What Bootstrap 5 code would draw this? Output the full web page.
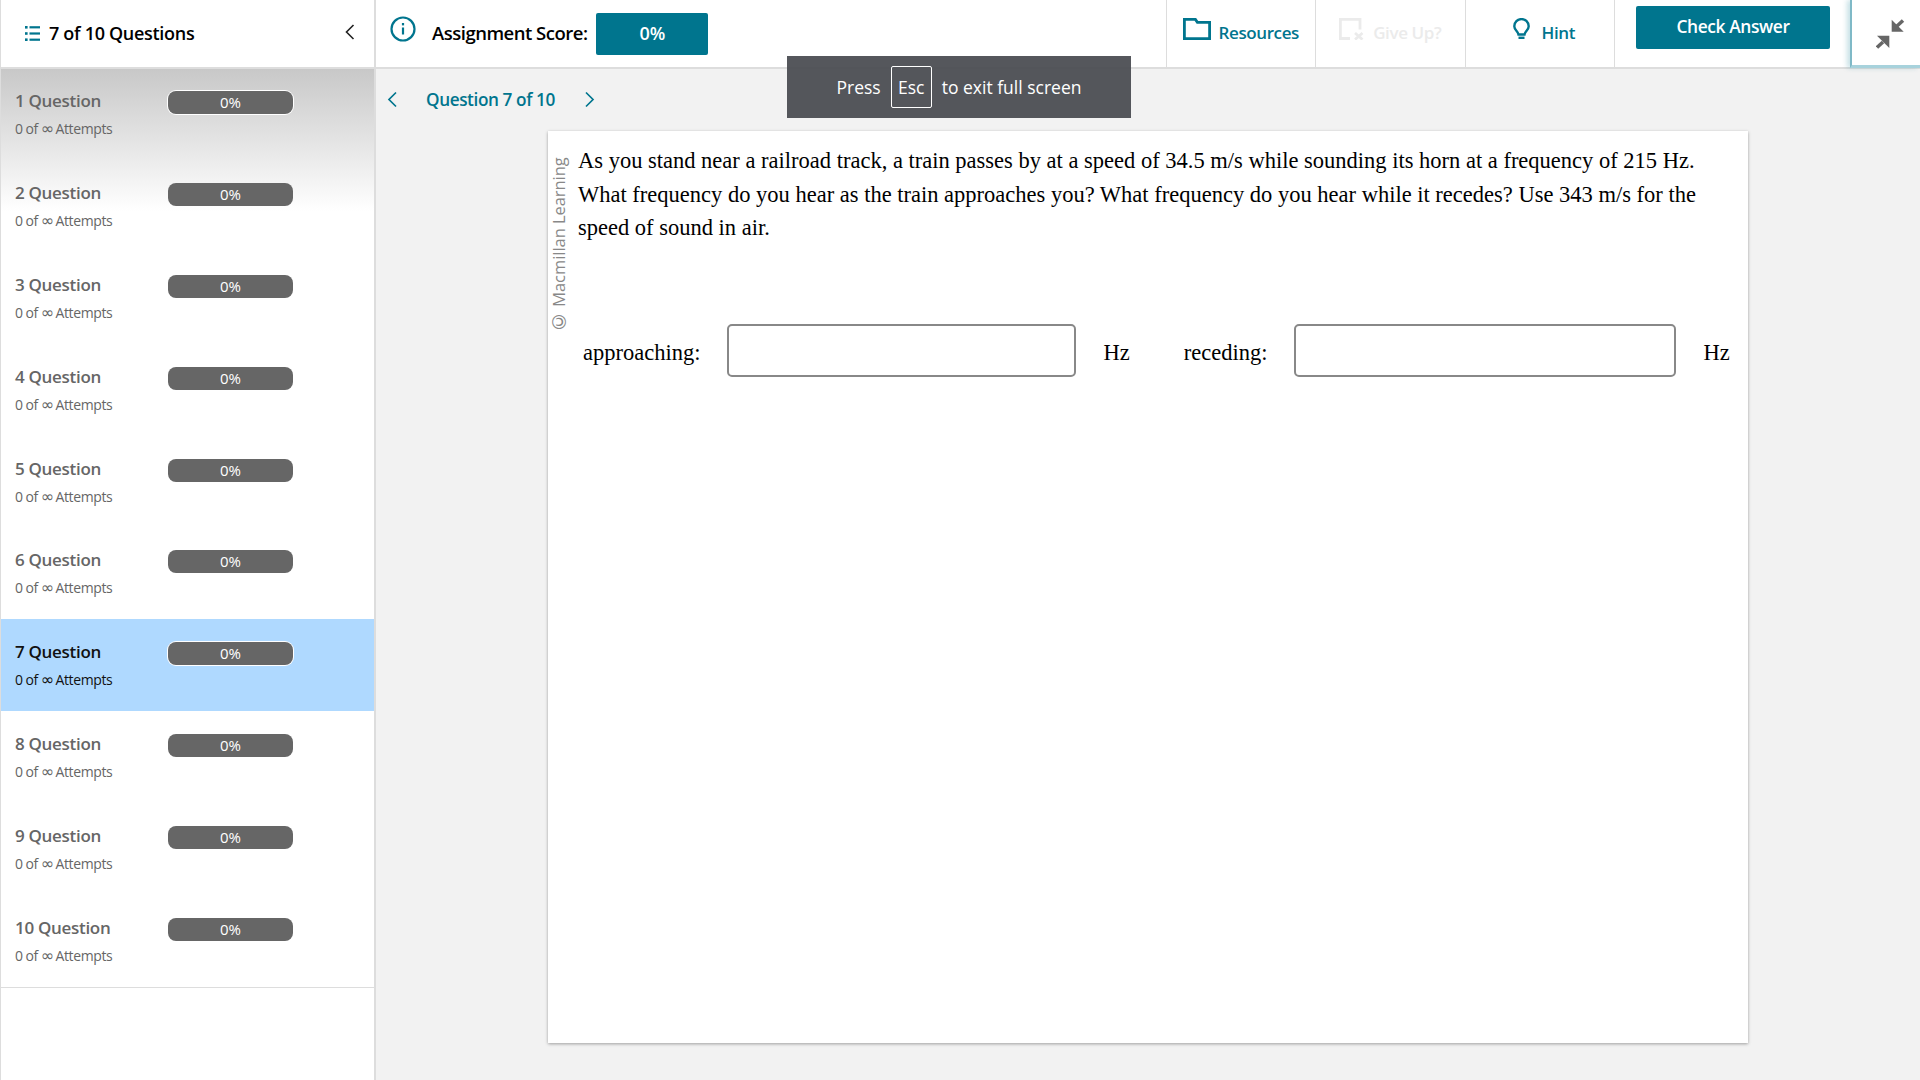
<!DOCTYPE html>
<html lang="en">
<head>
<meta charset="utf-8">
<title>Assignment</title>
<link rel="stylesheet" href="https://cdn.jsdelivr.net/npm/bootstrap@5.3.0/dist/css/bootstrap.min.css">
<style>
html,body{height:100%;margin:0;overflow:hidden}
body{font-family:"Open Sans","Noto Sans",sans-serif;background:#f2f2f2;color:#000;position:relative}
.app-shell{height:1080px}
.side-pane{width:376px;flex:none;background:#fff;border-left:1px solid #ddd;border-right:2px solid #ddd}
.side-head{height:69px;border-bottom:2px solid #ddd;padding:0 17px 0 24px}
.side-title{font-size:18px;font-weight:600;letter-spacing:-.3px;margin-left:9px}
.teal-ico{color:#00758e}
.q-list{background:linear-gradient(#c8c8c8,#fff 142px) no-repeat;border-bottom:1px solid #ddd}
.q-row{height:91.9px;padding:22px 14px 0;color:#666;display:flex}
.q-row:first-child{height:90.9px;padding-top:21px}
.q-row.is-current{background:#afd9ff;color:#111}
.q-text{width:153px;flex:none}
.q-name{font-size:17px;font-weight:600;line-height:20px;letter-spacing:-.3px;margin-top:1px}
.q-tries{font-size:14px;line-height:18px;margin-top:9px;letter-spacing:-.4px;word-spacing:-.3px}
.inf-glyph{font-family:"DejaVu Sans",sans-serif;font-size:16px;line-height:0;letter-spacing:-1.5px}
.q-pill{width:125px;height:23px;margin-top:1px;background:#666;color:#fff;border-radius:8px;font-size:15px;line-height:23px;text-align:center}
.q-pill.is-ring{box-shadow:0 0 0 1px #fff}
.main-pane{min-width:0}
.top-bar{height:69px;background:#fff;border-bottom:2px solid #ddd}
.info-ico{margin:16px 0 0 14px}
.score-label{font-size:18.5px;font-weight:600;letter-spacing:-.5px;margin-left:16px;padding-bottom:1px}
.score-box{width:112px;height:42px;margin:13px 0 0 9px;border-radius:2px;background:#00758e;color:#fff;font-size:18px;font-weight:600;line-height:40px;text-align:center}
.tool-cell{height:67px;width:149.5px;padding-bottom:2px;border-left:1px solid #ddd;color:#00758e;font-size:17px;font-weight:600;letter-spacing:-.4px}
.tool-cell.is-off{color:#ebebeb}
.hint-cell{padding-left:8px;gap:12px}
.check-cell{width:236px}
.check-btn{width:194px;height:43px;margin:6px 0 0 21px;padding:0 0 3px;background:#00758e;border:0;border-radius:2px;color:#fff;font-size:17.4px;font-weight:600;letter-spacing:-.4px}
.shrink-cell{width:70px;height:68px;flex:none;border-left:2px solid #7fb9c7;border-bottom:3px solid #a7d2dc;background:#fff;box-shadow:-3px 0 5px rgba(0,117,142,.22)}
.shrink-ico{margin:3px 0 0 8px}
.crumb-row{height:61px;padding-left:11px;color:#00758e;font-size:17.2px;font-weight:600;letter-spacing:-.4px}
.crumb-text{margin:0 29px 0 28px}
.sheet{width:1200px;height:912px;margin:1px 0 0 172px;background:#fff;box-shadow:0 1px 3px rgba(0,0,0,.35)}
.credit{writing-mode:vertical-rl;transform:rotate(180deg);font-size:16.4px;line-height:17px;color:#888;height:173px;width:17px;margin:29px 11px 0 2px;white-space:nowrap;font-family:"Open Sans",sans-serif;flex:none}
.credit-c{font-family:"DejaVu Sans",sans-serif;font-size:19px}
.q-body{font-family:"Liberation Serif","Times New Roman",serif;font-size:22.5px;line-height:33.5px;color:#000}
.q-prompt{width:1150px;margin:13px 0 0;height:180px}
.q-answers{margin-left:5px;height:52px}
.ans-label{padding-top:12px}
.blank{height:53px;border:2px solid #888;border-radius:5px;background:#fff}
.blank-a{width:349px;margin:0 27px}
.blank-b{width:382px;margin:0 27px}
.hz-gap{margin-right:54px}
.fs-toast{position:absolute;left:787px;top:56px;width:344px;height:62px;background:rgba(70,73,78,.92);color:#fff;font-family:"Open Sans",sans-serif;font-size:17.5px}
.fs-key{border:1px solid #fff;border-radius:2px;height:42px;width:41px;margin:0 10px;line-height:40px;text-align:center}
</style>
</head>
<body>
<div class="app-shell d-flex">
  <aside class="side-pane">
    <div class="side-head d-flex align-items-center">
      <svg class="teal-ico" width="15" height="15" viewBox="0 0 15 15" fill="currentColor"><rect x="0" y="0" width="2.600" height="2.600"/><rect x="0" y="6.200" width="2.600" height="2.600"/><rect x="0" y="12.400" width="2.600" height="2.600"/><rect x="4.500" y=".2" width="10.500" height="2.200"/><rect x="4.500" y="6.400" width="10.500" height="2.200"/><rect x="4.500" y="12.600" width="10.500" height="2.200"/></svg>
      <span class="side-title">7 of 10 Questions</span>
      <svg class="ms-auto mb-1" width="14" height="18" viewBox="0 0 14 18" fill="none" stroke="#222" stroke-width="1.6"><path d="M10.500 2 3.500 9l7 7"/></svg>
    </div>
    <div class="q-list">
      <div class="q-row"><div class="q-text"><div class="q-name">1 Question</div><div class="q-tries">0 of <span class="inf-glyph">∞</span> Attempts</div></div><div class="q-pill is-ring">0%</div></div>
      <div class="q-row"><div class="q-text"><div class="q-name">2 Question</div><div class="q-tries">0 of <span class="inf-glyph">∞</span> Attempts</div></div><div class="q-pill">0%</div></div>
      <div class="q-row"><div class="q-text"><div class="q-name">3 Question</div><div class="q-tries">0 of <span class="inf-glyph">∞</span> Attempts</div></div><div class="q-pill">0%</div></div>
      <div class="q-row"><div class="q-text"><div class="q-name">4 Question</div><div class="q-tries">0 of <span class="inf-glyph">∞</span> Attempts</div></div><div class="q-pill">0%</div></div>
      <div class="q-row"><div class="q-text"><div class="q-name">5 Question</div><div class="q-tries">0 of <span class="inf-glyph">∞</span> Attempts</div></div><div class="q-pill">0%</div></div>
      <div class="q-row"><div class="q-text"><div class="q-name">6 Question</div><div class="q-tries">0 of <span class="inf-glyph">∞</span> Attempts</div></div><div class="q-pill">0%</div></div>
      <div class="q-row is-current"><div class="q-text"><div class="q-name">7 Question</div><div class="q-tries">0 of <span class="inf-glyph">∞</span> Attempts</div></div><div class="q-pill is-ring">0%</div></div>
      <div class="q-row"><div class="q-text"><div class="q-name">8 Question</div><div class="q-tries">0 of <span class="inf-glyph">∞</span> Attempts</div></div><div class="q-pill">0%</div></div>
      <div class="q-row"><div class="q-text"><div class="q-name">9 Question</div><div class="q-tries">0 of <span class="inf-glyph">∞</span> Attempts</div></div><div class="q-pill">0%</div></div>
      <div class="q-row"><div class="q-text"><div class="q-name">10 Question</div><div class="q-tries">0 of <span class="inf-glyph">∞</span> Attempts</div></div><div class="q-pill">0%</div></div>
    </div>
  </aside>
  <main class="main-pane flex-grow-1">
    <div class="top-bar d-flex align-items-start">
      <svg class="teal-ico info-ico" width="26" height="26" viewBox="0 0 26 26" fill="none" stroke="currentColor" stroke-width="2.200"><circle cx="13" cy="13" r="11.500"/><path d="M13 11.500v7"/><path d="M13 7v2.400"/></svg>
      <span class="score-label align-self-center">Assignment Score:</span>
      <div class="score-box">0%</div>
      <div class="d-flex ms-auto">
        <div class="tool-cell d-flex align-items-center justify-content-center gap-2"><svg class="mb-2" width="28" height="22" viewBox="0 0 28 22" fill="none" stroke="currentColor" stroke-width="2.800"><path d="M1.400 20.600V1.400h11l2 3h12.200v16.200z"/></svg><span>Resources</span></div>
        <div class="tool-cell is-off d-flex align-items-center justify-content-center gap-2"><svg class="mb-2" width="26" height="22" viewBox="0 0 26 22" fill="none" stroke="currentColor" stroke-width="2.800"><path d="M11 20.500H1.400V1.400H21v10"/><path d="m16 15 7.500 6.500m0-6.500L16 21.500"/></svg><span>Give Up?</span></div>
        <div class="tool-cell hint-cell d-flex align-items-center justify-content-center"><svg class="mb-2" width="17" height="21" viewBox="0 0 17 21" fill="none" stroke="currentColor" stroke-width="2.400"><path d="M5.500 16.500C5 13 1.300 12 1.300 8.300a7.200 7.200 0 0 1 14.400 0c0 3.700-3.700 4.700-4.200 8.200z"/><path d="M5.500 19.800h6"/></svg><span>Hint</span></div>
        <div class="tool-cell check-cell"><button type="button" class="check-btn">Check Answer</button></div>
      </div>
      <div class="shrink-cell d-flex align-items-center justify-content-center"><svg class="shrink-ico" width="29" height="30" viewBox="0 0 29 30" fill="#666" stroke="#666"><path d="M15.700.7v12h12z" stroke="none"/><path d="M21 7l6-5.500" stroke-width="3.500"/><path d="M13.300 16.700h-12.300l12.300 12.300z" stroke="none"/><path d="M7 23l-6 5.500" stroke-width="3.500"/></svg></div>
    </div>
    <div class="crumb-row d-flex align-items-center">
      <svg class="teal-ico" width="11" height="17" viewBox="0 0 11 17" fill="none" stroke="currentColor" stroke-width="1.700"><path d="M9 1.500 2 8.500l7 7"/></svg>
      <span class="crumb-text">Question 7 of 10</span>
      <svg class="teal-ico" width="11" height="17" viewBox="0 0 11 17" fill="none" stroke="currentColor" stroke-width="1.700"><path d="m2 1.500 7 7-7 7"/></svg>
    </div>
    <section class="sheet d-flex">
      <div class="credit"><span class="credit-c">©</span> Macmillan Learning</div>
      <div class="q-body">
        <p class="q-prompt">As you stand near a railroad track, a train passes by at a speed of 34.5 m/s while sounding its horn at a frequency of 215 Hz. What frequency do you hear as the train approaches you? What frequency do you hear while it recedes? Use 343 m/s for the speed of sound in air.</p>
        <div class="q-answers d-flex align-items-start">
          <span class="ans-label">approaching:</span><div class="blank blank-a"></div><span class="ans-label hz-gap">Hz</span>
          <span class="ans-label">receding:</span><div class="blank blank-b"></div><span class="ans-label">Hz</span>
        </div>
      </div>
    </section>
  </main>
</div>
<div class="fs-toast d-flex align-items-center justify-content-center"><span>Press</span><span class="fs-key">Esc</span><span>to exit full screen</span></div>
<script src="https://cdn.jsdelivr.net/npm/bootstrap@5.3.0/dist/js/bootstrap.bundle.min.js"></script>
</body>
</html>
